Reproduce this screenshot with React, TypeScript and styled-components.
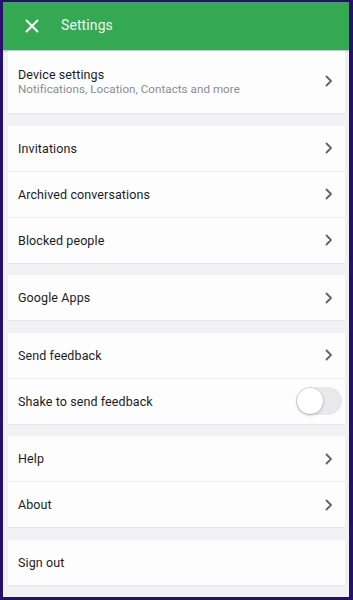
import * as React from 'react';
import styled, { createGlobalStyle } from 'styled-components';

const GlobalStyle = createGlobalStyle`
  html, body {
    margin: 0;
    padding: 0;
    background: #24106a;
  }
  * {
    box-sizing: border-box;
  }
`;

const Frame = styled.div`
  width: 353px;
  height: 600px;
  border-style: solid;
  border-color: #26106b;
  border-width: 2px 4px 3px 3px;
  background: #f1f1f4;
  font-family: Roboto, "Liberation Sans", sans-serif;
  display: flex;
  flex-direction: column;
  overflow: hidden;
`;

const Header = styled.header`
  height: 48px;
  flex-shrink: 0;
  background: #35a853;
  display: flex;
  align-items: center;
  padding-left: 22px;
  gap: 22px;
  box-shadow: 0 1px 2px rgba(0, 0, 0, 0.25);
`;

const Title = styled.h1`
  margin: 0 0 2px;
  font-size: 14px;
  font-weight: 400;
  color: #eef8ef;
  letter-spacing: 0.1px;
`;

const Content = styled.main`
  display: flex;
  flex-direction: column;
  gap: 11.5px;
  padding: 1px 4px 0 5px;
`;

const Card = styled.section`
  background: #fdfdfe;
  border-bottom: 1px solid #e4e4e8;
  display: flex;
  flex-direction: column;
`;

const Row = styled.div<{ $tall?: boolean }>`
  height: ${(p) => (p.$tall ? '62px' : '45px')};
  flex-shrink: 0;
  display: flex;
  align-items: center;
  justify-content: space-between;
  padding: ${(p) => (p.$tall ? '0 12px 2px 10px' : '0 12px 0 10px')};

  & + & {
    height: 46px;
    border-top: 1px solid #ededf0;
  }
`;

const TextBlock = styled.div`
  display: flex;
  flex-direction: column;
`;

const Label = styled.span`
  font-size: 12.5px;
  color: #1c1c1e;
  letter-spacing: 0.1px;
`;

const Sub = styled.span`
  font-size: 11.6px;
  color: #8a8d91;
  letter-spacing: 0.05px;
`;

const Toggle = styled.div`
  width: 46px;
  height: 28px;
  border-radius: 14px;
  background: #e9e9ec;
  padding: 1px;
  margin-right: -9px;
  display: flex;
  align-items: center;
`;

const Knob = styled.div`
  width: 26px;
  height: 26px;
  border-radius: 50%;
  background: #ffffff;
  box-shadow: 0 1px 3px rgba(0, 0, 0, 0.25), 0 0 0 0.5px rgba(0, 0, 0, 0.08);
`;

const CloseIcon = () => (
  <svg width="14" height="14" viewBox="0 0 14 14">
    <path d="M1.5 1.5 L12.5 12.5 M12.5 1.5 L1.5 12.5" stroke="#ffffff" strokeWidth="2" strokeLinecap="round" />
  </svg>
);

const Chevron = () => (
  <svg width="8" height="12" viewBox="0 0 8 12">
    <path d="M1.5 1.5 L6 6 L1.5 10.5" stroke="#5f6368" strokeWidth="1.8" fill="none" strokeLinecap="round" strokeLinejoin="round" />
  </svg>
);

type Item = { label: string; sub?: string; kind?: 'link' | 'toggle' | 'plain' };

const groups: Item[][] = [
  [{ label: 'Device settings', sub: 'Notifications, Location, Contacts and more' }],
  [{ label: 'Invitations' }, { label: 'Archived conversations' }, { label: 'Blocked people' }],
  [{ label: 'Google Apps' }],
  [{ label: 'Send feedback' }, { label: 'Shake to send feedback', kind: 'toggle' }],
  [{ label: 'Help' }, { label: 'About' }],
  [{ label: 'Sign out', kind: 'plain' }],
];

export default function App() {
  return (
    <>
      <GlobalStyle />
      <Frame>
        <Header>
          <CloseIcon />
          <Title>Settings</Title>
        </Header>
        <Content>
          {groups.map((group, gi) => (
            <Card key={gi}>
              {group.map((item) => (
                <Row key={item.label} $tall={!!item.sub}>
                  <TextBlock>
                    <Label>{item.label}</Label>
                    {item.sub && <Sub>{item.sub}</Sub>}
                  </TextBlock>
                  {item.kind === 'toggle' ? (
                    <Toggle>
                      <Knob />
                    </Toggle>
                  ) : item.kind === 'plain' ? null : (
                    <Chevron />
                  )}
                </Row>
              ))}
            </Card>
          ))}
        </Content>
      </Frame>
    </>
  );
}
